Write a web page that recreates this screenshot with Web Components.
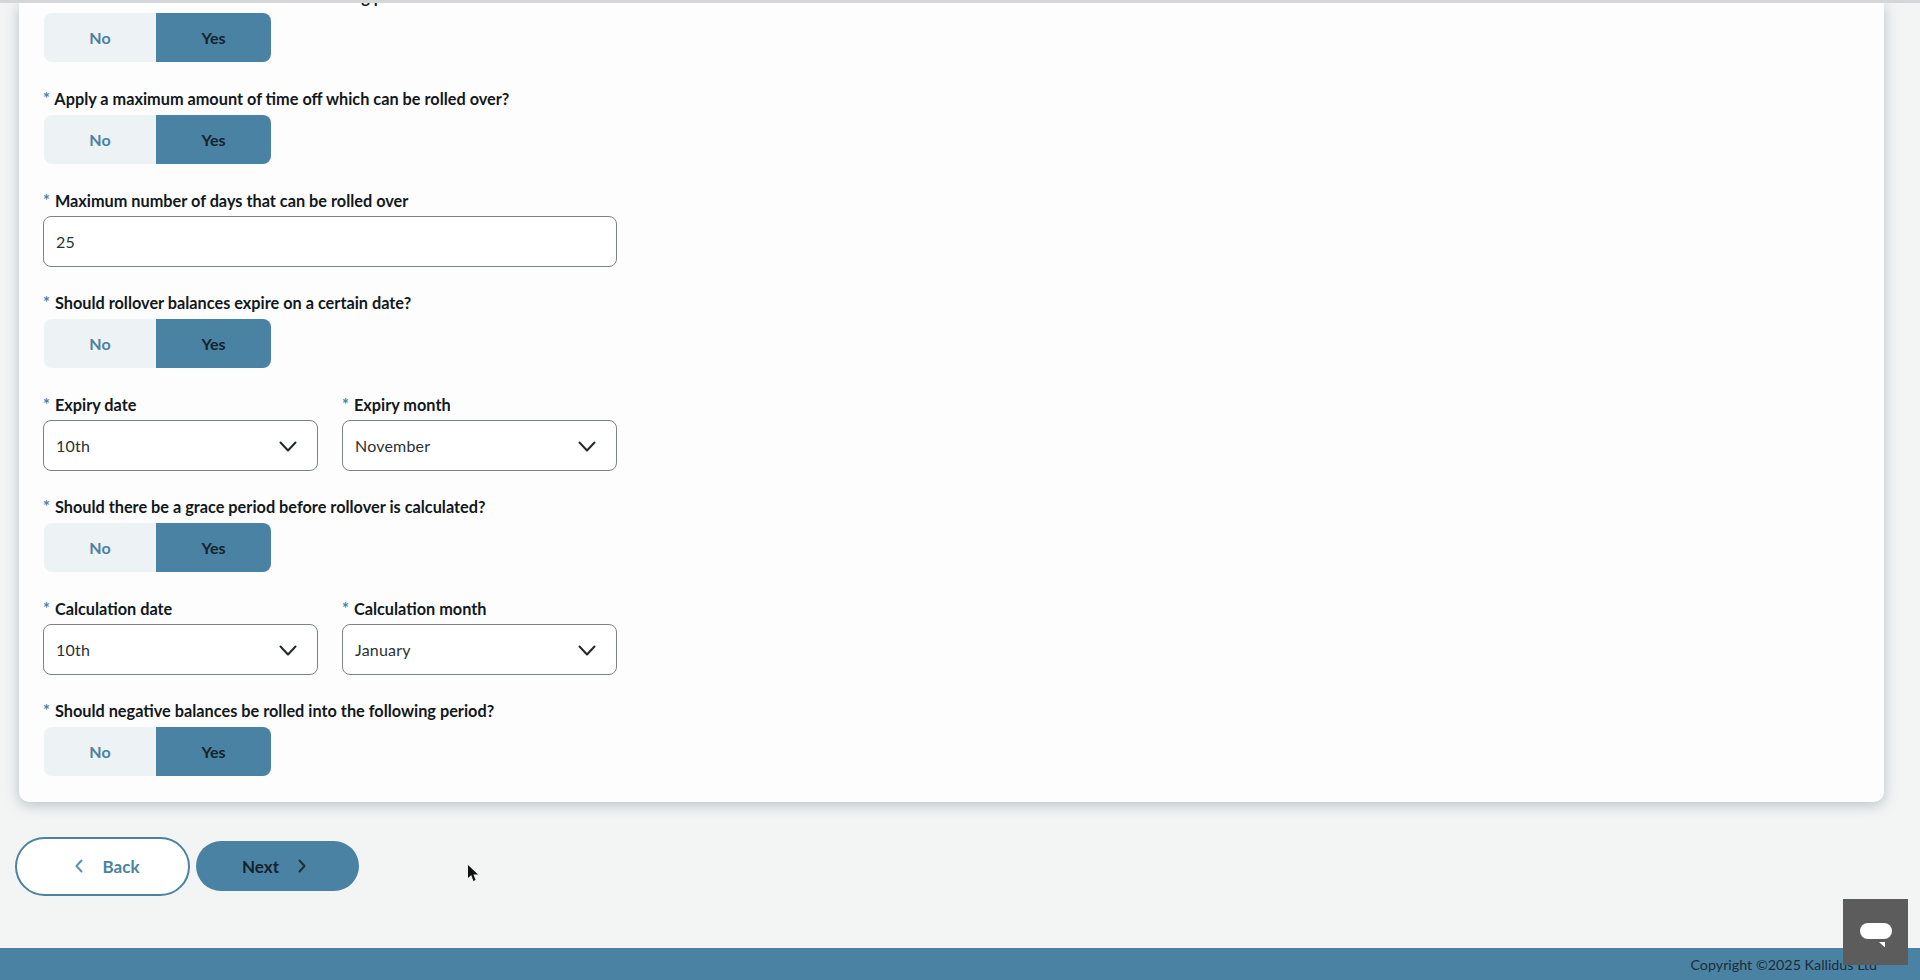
<!DOCTYPE html>
<html lang="en">
<head>
<meta charset="utf-8">
<title>Rollover settings</title>
<style>
  html, body { margin: 0; height: 980px; overflow: hidden; }
  body {
    background: #f3f5f5;
    font-family: Lato, "Liberation Sans", sans-serif;
    color: #12181c;
    display: flex;
    flex-direction: column;
  }
</style>
</head>
<body>
  <top-edge></top-edge>
  <form-card>
    <form-field label="Should balances be rolled into the following period?"><yes-no></yes-no></form-field>
    <form-field label="Apply a maximum amount of time off which can be rolled over?"><yes-no></yes-no></form-field>
    <form-field label="Maximum number of days that can be rolled over"><text-box value="25"></text-box></form-field>
    <form-field label="Should rollover balances expire on a certain date?"><yes-no></yes-no></form-field>
    <field-pair>
      <form-field label="Expiry date"><select-box value="10th"></select-box></form-field>
      <form-field label="Expiry month"><select-box value="November"></select-box></form-field>
    </field-pair>
    <form-field label="Should there be a grace period before rollover is calculated?"><yes-no></yes-no></form-field>
    <field-pair>
      <form-field label="Calculation date"><select-box value="10th"></select-box></form-field>
      <form-field label="Calculation month"><select-box value="January"></select-box></form-field>
    </field-pair>
    <form-field label="Should negative balances be rolled into the following period?"><yes-no></yes-no></form-field>
  </form-card>
  <wizard-nav></wizard-nav>
  <page-footer>Copyright ©2025 Kallidus Ltd</page-footer>
  <chat-button></chat-button>
  <mouse-pointer></mouse-pointer>

<script>
const CHEVRON_DOWN = '<svg width="20" height="12" viewBox="0 0 20 12" fill="none" stroke="#22282c" stroke-width="2" stroke-linecap="round" stroke-linejoin="round"><path d="M2.5 2.5 10 10.5l7.5-8"/></svg>';

class TopEdge extends HTMLElement {
  constructor() {
    super();
    this.attachShadow({ mode: 'open' }).innerHTML = `
      <style>
        :host { display: block; height: 3px; background: #d4d6d8; flex: none; position: relative; z-index: 2; }
      </style>`;
  }
}

class FormCard extends HTMLElement {
  constructor() {
    super();
    this.attachShadow({ mode: 'open' }).innerHTML = `
      <style>
        :host {
          display: block;
          flex: none;
          height: 799px;
          box-sizing: border-box;
          margin: 0 36px 0 19px;
          padding: 0 24px;
          background: #fdfdfd;
          border-radius: 0 0 10px 10px;
          box-shadow: 0 3px 14px rgba(90, 105, 115, .38);
          overflow: hidden;
        }
        .stack { display: flex; flex-direction: column; gap: 26px; width: 574px; margin-top: -16px; }
      </style>
      <div class="stack"><slot></slot></div>`;
  }
}

class FormField extends HTMLElement {
  constructor() {
    super();
    this.attachShadow({ mode: 'open' }).innerHTML = `
      <style>
        :host { display: flex; flex-direction: column; gap: 6px; min-width: 0; }
        label {
          height: 20px;
          line-height: 20px;
          font-size: 16.3px;
          font-weight: 700;
          white-space: nowrap;
        }
        i { color: #4a82a3; font-style: normal; font-weight: 700; margin-right: 1px; }
      </style>
      <label><i>*</i> <span></span></label>
      <slot></slot>`;
  }
  connectedCallback() {
    this.shadowRoot.querySelector('span').textContent = this.getAttribute('label');
  }
}

class FieldPair extends HTMLElement {
  constructor() {
    super();
    this.attachShadow({ mode: 'open' }).innerHTML = `
      <style>
        :host { display: grid; grid-template-columns: 1fr 1fr; column-gap: 24px; }
      </style>
      <slot></slot>`;
  }
}

class YesNo extends HTMLElement {
  constructor() {
    super();
    this.attachShadow({ mode: 'open' }).innerHTML = `
      <style>
        :host {
          display: grid;
          grid-template-columns: 112px 115px;
          width: 227px;
          height: 49px;
          margin: 0 0 1px 1px;
          font-size: 16px;
          font-weight: 700;
        }
        div { display: flex; align-items: center; justify-content: center; }
        .no { background: #edf2f5; color: #4a82a3; border-radius: 8px 0 0 8px; }
        .yes { background: #4a82a3; color: #14222c; border-radius: 0 8px 8px 0; }
      </style>
      <div class="no">No</div>
      <div class="yes">Yes</div>`;
  }
}

class TextBox extends HTMLElement {
  constructor() {
    super();
    this.attachShadow({ mode: 'open' }).innerHTML = `
      <style>
        :host {
          display: flex;
          align-items: center;
          box-sizing: border-box;
          height: 51px;
          margin-top: -1px;
          padding: 0 12px;
          background: #fff;
          border: 1.5px solid #7d8285;
          border-radius: 8px;
          font-size: 16px;
          letter-spacing: .2px;
          color: #2b3237;
        }
      </style>
      <span></span>`;
  }
  connectedCallback() {
    this.shadowRoot.querySelector('span').textContent = this.getAttribute('value');
  }
}

class SelectBox extends HTMLElement {
  constructor() {
    super();
    this.attachShadow({ mode: 'open' }).innerHTML = `
      <style>
        :host {
          display: flex;
          align-items: center;
          justify-content: space-between;
          box-sizing: border-box;
          height: 51px;
          margin-top: -1px;
          padding: 0 19px 0 12px;
          background: #fff;
          border: 1.5px solid #7d8285;
          border-radius: 8px;
          font-size: 16px;
          letter-spacing: .2px;
          color: #2b3237;
        }
        svg { display: block; }
      </style>
      <span></span>${CHEVRON_DOWN}`;
  }
  connectedCallback() {
    this.shadowRoot.querySelector('span').textContent = this.getAttribute('value');
  }
}

class WizardNav extends HTMLElement {
  constructor() {
    super();
    this.attachShadow({ mode: 'open' }).innerHTML = `
      <style>
        :host {
          display: flex;
          align-items: center;
          gap: 6px;
          flex: none;
          height: 146px;
          box-sizing: border-box;
          padding: 0 0 18px 15px;
          font-size: 17px;
          font-weight: 700;
        }
        div { display: flex; align-items: center; justify-content: center; box-sizing: border-box; border-radius: 30px; }
        .back {
          width: 175px;
          height: 59px;
          gap: 19px;
          padding-left: 8px;
          background: #fff;
          border: 2px solid #4a82a3;
          color: #4a82a3;
        }
        .next { width: 163px; height: 50px; gap: 18px; padding-right: 6px; background: #4a82a3; color: #14222c; }
        svg { display: block; }
      </style>
      <div class="back">
        <svg width="10" height="14" viewBox="0 0 10 14" fill="none" stroke="#5f92ae" stroke-width="2" stroke-linecap="round" stroke-linejoin="round"><path d="M7.5 1.5 2.5 7l5 5.5"/></svg>
        <span>Back</span>
      </div>
      <div class="next">
        <span>Next</span>
        <svg width="10" height="14" viewBox="0 0 10 14" fill="none" stroke="#1d2f3a" stroke-width="2" stroke-linecap="round" stroke-linejoin="round"><path d="M2.5 1.5 7.5 7l-5 5.5"/></svg>
      </div>`;
  }
}

class PageFooter extends HTMLElement {
  constructor() {
    super();
    this.attachShadow({ mode: 'open' }).innerHTML = `
      <style>
        :host {
          display: flex;
          justify-content: flex-end;
          align-items: center;
          flex: none;
          height: 32px;
          box-sizing: border-box;
          padding: 0 43px 0 0;
          background: #4a82a3;
          color: #1c2d3a;
          font-size: 14.3px;
        }
      </style>
      <slot></slot>`;
  }
}

class ChatButton extends HTMLElement {
  constructor() {
    super();
    this.attachShadow({ mode: 'open' }).innerHTML = `
      <style>
        :host {
          position: fixed;
          left: 1843px;
          top: 899px;
          width: 65px;
          height: 66px;
          box-sizing: border-box;
          padding: 24px 0 0 17px;
          background: #5c5c5c;
        }
        svg { display: block; }
      </style>
      <svg width="32" height="25" viewBox="0 0 32 25">
        <rect x="0" y="0" width="32" height="16" rx="8" fill="#fff"/>
        <path d="M19 19h6v5.500z" fill="#fff"/>
      </svg>`;
  }
}

class MousePointer extends HTMLElement {
  constructor() {
    super();
    this.attachShadow({ mode: 'open' }).innerHTML = `
      <style>
        :host { position: fixed; left: 468px; top: 865px; width: 11px; height: 17px; }
        svg { display: block; }
      </style>
      <svg width="11" height="17" viewBox="0 0 11 17">
        <path d="M0 0v13l3.2-3 2.2 6 2.2-.9-2.2-5.600H10z" fill="#111"/>
      </svg>`;
  }
}

customElements.define('top-edge', TopEdge);
customElements.define('form-card', FormCard);
customElements.define('form-field', FormField);
customElements.define('field-pair', FieldPair);
customElements.define('yes-no', YesNo);
customElements.define('text-box', TextBox);
customElements.define('select-box', SelectBox);
customElements.define('wizard-nav', WizardNav);
customElements.define('page-footer', PageFooter);
customElements.define('chat-button', ChatButton);
customElements.define('mouse-pointer', MousePointer);
</script>
</body>
</html>
